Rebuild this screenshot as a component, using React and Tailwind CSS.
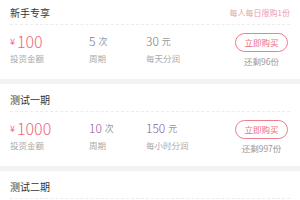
import React from "react";

const products = [
  {
    title: "新手专享",
    limit: "每人每日限购1份",
    amount: "100",
    period: "5",
    profit: "30",
    profitLabel: "每天分润",
    left: "还剩96份",
    numColor: "text-[#777777]",
  },
  {
    title: "测试一期",
    amount: "1000",
    period: "10",
    profit: "150",
    profitLabel: "每小时分润",
    left: "还剩997份",
    numColor: "text-[#8a5a9c]",
  },
];

const Card = ({ item }) => (
  <div className="bg-white px-[10px]">
    {/* header */}
    <div className="flex h-[28px] items-end justify-between border-b border-dashed border-[#ececec] pb-[6px]">
      <span className="text-[10px] leading-[11px] text-[#333333]">{item.title}</span>
      {item.limit && (
        <span className="text-[8px] leading-[11px] text-[#f29aa6]">{item.limit}</span>
      )}
    </div>

    {/* body */}
    {item.amount && (
      <div className="flex pt-[6px] pb-[11px]">
        <div className="w-[79px]">
          <div className="flex h-[20px] items-center text-[#f0667c]">
            <span className="mr-[2px] mt-[2px] text-[9px]">¥</span>
            <span className="text-[16px] font-light leading-[20px]">{item.amount}</span>
          </div>
          <div className="text-[8.5px] leading-[14px] text-[#aaaaaa]">投资金额</div>
        </div>
        <div className="w-[57px]">
          <div className="flex h-[20px] items-center">
            <span className={`text-[12px] font-light leading-[20px] ${item.numColor}`}>{item.period}</span>
            <span className="ml-[3px] mt-[1px] text-[9px] text-[#999999]">次</span>
          </div>
          <div className="text-[8.5px] leading-[14px] text-[#aaaaaa]">周期</div>
        </div>
        <div className="flex-1">
          <div className="flex h-[20px] items-center">
            <span className={`text-[12px] font-light leading-[20px] ${item.numColor}`}>{item.profit}</span>
            <span className="ml-[3px] mt-[1px] text-[9px] text-[#999999]">元</span>
          </div>
          <div className="text-[8.5px] leading-[14px] text-[#aaaaaa]">{item.profitLabel}</div>
        </div>
        <div className="mr-[2px] flex w-[53px] flex-col items-center pt-[2px]">
          <button className="flex h-[19px] w-[53px] items-center justify-center rounded-full border border-[#ee7d8d] text-[8.5px] text-[#ee6a7c]">
            立即购买
          </button>
          <div className="mt-[2px] text-[8.5px] leading-[14px] text-[#999999]">{item.left}</div>
        </div>
      </div>
    )}
  </div>
);

const App = () => {
  return (
    <div
      className="-mt-[3px] w-[300px] bg-white"
      style={{ fontFamily: '"Noto Sans CJK SC", "Noto Sans", sans-serif' }}
    >
      <Card item={products[0]} />
      <div className="h-[5px] bg-[#f2f2f2]" />
      <Card item={products[1]} />
      <div className="h-[5px] bg-[#f2f2f2]" />
      <Card item={{ title: "测试二期" }} />
    </div>
  );
};

export default App;
